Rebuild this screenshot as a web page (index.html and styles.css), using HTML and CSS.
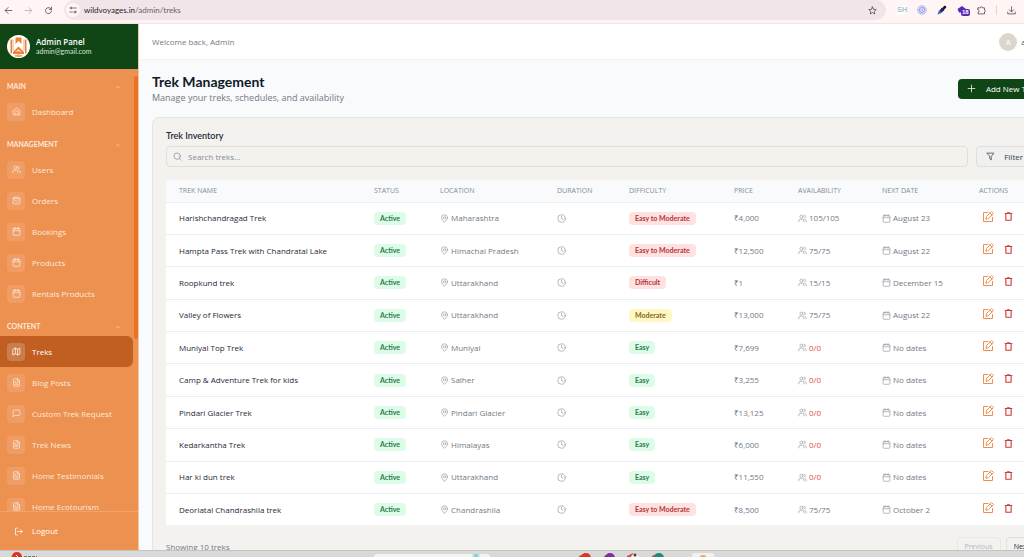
FILE: index.html
```
<!DOCTYPE html>
<html lang="en">
<head>
<meta charset="utf-8">
<title>Trek Management</title>
<link rel="stylesheet" href="styles.css">
</head>
<body>
<svg class="defs" aria-hidden="true">
  <symbol id="back" viewBox="0 0 24 24"><path d="M21 12H4M11 4l-8 8 8 8"/></symbol>
  <symbol id="forward" viewBox="0 0 24 24"><path d="M3 12h17M13 4l8 8-8 8"/></symbol>
  <symbol id="reload" viewBox="0 0 24 24"><path d="M20 13a8 8 0 1 1-2.500-6.500L20 9M20 3v6h-6"/></symbol>
  <symbol id="tune" viewBox="0 0 24 24"><circle cx="6" cy="6" r="3"/><path d="M13 6h9M2 18h9"/><circle cx="18" cy="18" r="3"/></symbol>
  <symbol id="star" viewBox="0 0 24 24"><path d="M12 2.500l2.900 6.400 7 .7-5.300 4.700 1.500 6.900-6.100-3.600-6.100 3.600 1.500-6.900-5.300-4.700 7-.7z"/></symbol>
  <symbol id="puzzle" viewBox="0 0 24 24"><path d="M3 5h6c0-4 6-4 6 0h5v6c3 0 3 5 0 5v5H3v-5c4 0 4-6 0-6z"/></symbol>
  <symbol id="download" viewBox="0 0 24 24"><path d="M12 2v13M6 10l6 6 6-6M2 16v5h20v-5"/></symbol>
  <symbol id="up" viewBox="0 0 24 24"><path d="M5 16l7-7 7 7"/></symbol>
  <symbol id="home" viewBox="0 0 24 24"><path d="M3 10l9-7 9 7v9a2 2 0 0 1-2 2H5a2 2 0 0 1-2-2z"/><path d="M8 21v-6a4 4 0 0 1 8 0v6"/></symbol>
  <symbol id="users" viewBox="0 0 24 24"><circle cx="9" cy="7" r="4"/><path d="M2 21v-2a5 5 0 0 1 5-5h4a5 5 0 0 1 5 5v2M22 21v-2a4 4 0 0 0-3-4M16 3a4 4 0 0 1 0 8"/></symbol>
  <symbol id="bag" viewBox="0 0 24 24"><path d="M6 3h12l3 4v12a2 2 0 0 1-2 2H5a2 2 0 0 1-2-2V7zM3 7h18M16 11a4 4 0 0 1-8 0"/></symbol>
  <symbol id="calendar" viewBox="0 0 24 24"><rect x="3" y="4" width="18" height="18" rx="2"/><path d="M8 1v6M16 1v6M3 10h18"/></symbol>
  <symbol id="map" viewBox="0 0 24 24"><path d="M3 6l6-3 6 3 6-3v15l-6 3-6-3-6 3zM9 3v15M15 6v15"/></symbol>
  <symbol id="file" viewBox="0 0 24 24"><path d="M14 2H6a2 2 0 0 0-2 2v16a2 2 0 0 0 2 2h12a2 2 0 0 0 2-2V8zM14 2v6h6M8 13h8M8 17h8M8 9h2"/></symbol>
  <symbol id="chat" viewBox="0 0 24 24"><path d="M21 15a2 2 0 0 1-2 2H7l-4 4V5a2 2 0 0 1 2-2h14a2 2 0 0 1 2 2z"/></symbol>
  <symbol id="logout" viewBox="0 0 24 24"><path d="M9 3H4v18h5M9 12h13M17 7l5 5-5 5"/></symbol>
  <symbol id="search" viewBox="0 0 24 24"><circle cx="11" cy="11" r="8.500"/><path d="M17 17l5 5"/></symbol>
  <symbol id="filter" viewBox="0 0 24 24"><path d="M3 3h18l-7 9v9l-4-3v-6z"/></symbol>
  <symbol id="plus" viewBox="0 0 24 24"><path d="M12 3v18M3 12h18"/></symbol>
  <symbol id="pin" viewBox="0 0 24 24"><path d="M20 10c0 6-8 12-8 12s-8-6-8-12a8 8 0 0 1 16 0z"/><circle cx="12" cy="10" r="3"/></symbol>
  <symbol id="clock" viewBox="0 0 24 24"><circle cx="12" cy="12" r="10"/><path d="M12 6v6l4 2"/></symbol>
  <symbol id="edit" viewBox="0 0 24 24"><path d="M12 3H3v18h18v-8M8 16l1-5L19 1l4 4-10 10zM16 4l4 4"/></symbol>
  <symbol id="trash" viewBox="0 0 24 24"><path d="M3 4h18M9 3V2h6v1M5 6v16h14V6"/></symbol>
</svg>

<header class="browser">
  <button class="tool" aria-label="Back"><svg><use href="#back"/></svg></button>
  <button class="tool dim" aria-label="Forward"><svg><use href="#forward"/></svg></button>
  <button class="tool" aria-label="Reload"><svg><use href="#reload"/></svg></button>
  <div class="address">
    <span class="site"><svg><use href="#tune"/></svg></span>
    <span class="url"><b>wildvoyages.in</b>/admin/treks</span>
    <button class="tool" aria-label="Bookmark"><svg><use href="#star"/></svg></button>
  </div>
  <div class="extensions">
    <span class="ext-sh">SH</span>
    <svg class="ext" viewBox="0 0 20 20"><circle cx="10" cy="10" r="8.500" fill="#eef" stroke="#8d9be8" stroke-width="1.500"/><circle cx="10" cy="10" r="5" fill="none" stroke="#7d8ff0" stroke-width="2"/><path d="M10 5a5 5 0 0 1 5 5" fill="none" stroke="#f09a8a" stroke-width="2"/><circle cx="10" cy="10" r="2" fill="#85b8f5"/></svg>
    <svg class="ext" viewBox="0 0 20 20"><path d="M1 19l2-6 6-6 4 4-6 6z" fill="#3d69c8"/><path d="M8 7l2-2 1 1 3-4c3-2 6 1 4 4l-4 3 1 1-2 2z" fill="#17172b"/><path d="M5 11l5-5 4 4-5 5z" fill="#1f2b57"/></svg>
    <span class="ext-badge"><svg class="ext" viewBox="0 0 20 20"><path d="M1 8l9-6 8 6-2 7H4z" fill="#5a2bb0"/></svg><span class="count">18</span></span>
    <button class="tool" aria-label="Extensions"><svg><use href="#puzzle"/></svg></button>
    <span class="sep"></span>
    <button class="tool" aria-label="Downloads"><svg><use href="#download"/></svg></button>
  </div>
</header>

<div class="app">
  <aside class="sidebar">
    <div class="brand">
      <svg class="logo" viewBox="0 0 46 46"><circle cx="23" cy="23" r="23" fill="#fff"/><path d="M7 9h3v28H7zM36 9h3v28h-3z" fill="#e9843a"/><path d="M17 5h12v13l-6-6-6 6z" fill="#e9843a"/><path d="M12 34l11-11 11 11v4H12z" fill="#e9843a"/><path d="M23 29l6 5-6-2-6 2z" fill="#fff"/><path d="M11 9h2v22h-2zM33 9h2v22h-2z" fill="#f3a468"/><path d="M14 42c5-4 13-4 18 0-5 3-13 3-18 0z" fill="#f3a468"/></svg>
      <div><div class="brand-name">Admin Panel</div><div class="brand-mail">admin@gmail.com</div></div>
    </div>
    <nav class="nav">
      <button class="group">MAIN<svg><use href="#up"/></svg></button>
      <a class="item" href="#"><i><svg><use href="#home"/></svg></i>Dashboard</a>
      <button class="group">MANAGEMENT<svg><use href="#up"/></svg></button>
      <a class="item" href="#"><i><svg><use href="#users"/></svg></i>Users</a>
      <a class="item" href="#"><i><svg><use href="#bag"/></svg></i>Orders</a>
      <a class="item" href="#"><i><svg><use href="#calendar"/></svg></i>Bookings</a>
      <a class="item" href="#"><i><svg><use href="#calendar"/></svg></i>Products</a>
      <a class="item" href="#"><i><svg><use href="#calendar"/></svg></i>Rentals Products</a>
      <button class="group">CONTENT<svg><use href="#up"/></svg></button>
      <a class="item active" href="#"><i><svg><use href="#map"/></svg></i>Treks</a>
      <a class="item" href="#"><i><svg><use href="#file"/></svg></i>Blog Posts</a>
      <a class="item" href="#"><i><svg><use href="#chat"/></svg></i>Custom Trek Request</a>
      <a class="item" href="#"><i><svg><use href="#file"/></svg></i>Trek News</a>
      <a class="item" href="#"><i><svg><use href="#file"/></svg></i>Home Testimonials</a>
      <a class="item" href="#"><i><svg><use href="#file"/></svg></i>Home Ecotourism</a>
      <span class="thumb"></span>
    </nav>
    <button class="logout"><svg><use href="#logout"/></svg>Logout</button>
  </aside>

  <main class="main">
    <div class="page">
      <div class="topbar"><span>Welcome back, Admin</span><div class="user"><span class="avatar">A</span>admin</div></div>
      <div class="content">
        <div class="heading">
          <div><h1>Trek Management</h1><p>Manage your treks, schedules, and availability</p></div>
          <button class="add"><svg><use href="#plus"/></svg>Add New Trek</button>
        </div>
        <section class="card">
          <h2>Trek Inventory</h2>
          <div class="filters">
            <label class="search"><svg><use href="#search"/></svg><input type="text" placeholder="Search treks..." aria-label="Search treks"></label>
            <button class="filter"><svg><use href="#filter"/></svg>Filter</button>
          </div>
          <table class="treks">
            <colgroup><col class="c-name"><col class="c-status"><col class="c-location"><col class="c-duration"><col class="c-difficulty"><col class="c-price"><col class="c-avail"><col class="c-date"><col></colgroup>
            <thead><tr><th>TREK NAME</th><th>STATUS</th><th>LOCATION</th><th>DURATION</th><th>DIFFICULTY</th><th>PRICE</th><th>AVAILABILITY</th><th>NEXT DATE</th><th>ACTIONS</th></tr></thead>
            <tbody id="rows"></tbody>
          </table>
          <div class="pager"><span>Showing 10 treks</span><div><button disabled>Previous</button><button>Next</button></div></div>
        </section>
      </div>
    </div>
  </main>
</div>

<footer class="taskbar">
  <svg class="widget" viewBox="0 0 40 7"><path d="M0 7a7 7 0 0 1 4-5v5z" fill="#e8a33a"/><circle cx="6" cy="7" r="5" fill="#d8322b"/><path d="M5 5l3 3" stroke="#fff"/><path d="M13 6.500h13" stroke="#777" stroke-dasharray="3 1"/></svg>
  <div class="tasksearch"></div>
  <svg class="apps" viewBox="0 0 140 7"><path d="M4 6l6-3v4H4zM29 6l6-3v4h-6zM52 6l6-3v4h-6zM77 6l6-3v4h-6z" fill="#e04a3a"/><circle cx="11" cy="8" r="5" fill="#d9381e"/><circle cx="35" cy="8" r="5" fill="#7b2fa8"/><circle cx="60" cy="8" r="4" fill="#eee"/><circle cx="60" cy="5" r="1.500" fill="#5b3a2b"/><circle cx="84" cy="8" r="5" fill="#178f7c"/><rect x="117" y="3" width="22" height="6" rx="2" fill="#f1f0ee"/><path d="M125 7a3 2 0 0 1 6 0z" fill="#f0a45a"/></svg>
</footer>
<script src="rows.js"></script>
</body>
</html>
```
FILE: rows.js
```
const treks = [
  ["Harishchandragad Trek", "Maharashtra", "Easy to Moderate", "4,000", "105/105", "August 23"],
  ["Hampta Pass Trek with Chandratal Lake", "Himachal Pradesh", "Easy to Moderate", "12,500", "75/75", "August 22"],
  ["Roopkund trek", "Uttarakhand", "Difficult", "1", "15/15", "December 15"],
  ["Valley of Flowers", "Uttarakhand", "Moderate", "13,000", "75/75", "August 22"],
  ["Muniyal Top Trek", "Muniyal", "Easy", "7,699", "0/0", "No dates"],
  ["Camp & Adventure Trek for kids", "Salher", "Easy", "3,255", "0/0", "No dates"],
  ["Pindari Glacier Trek", "Pindari Glacier", "Easy", "13,125", "0/0", "No dates"],
  ["Kedarkantha Trek", "Himalayas", "Easy", "6,000", "0/0", "No dates"],
  ["Har ki dun trek", "Uttarakhand", "Easy", "11,550", "0/0", "No dates"],
  ["Deoriatal Chandrashila trek", "Chandrashila", "Easy to Moderate", "8,500", "75/75", "October 2"]
];
const tones = { "Easy": "green", "Moderate": "yellow", "Difficult": "red", "Easy to Moderate": "red" };
const icon = (name) => `<svg><use href="#${name}"/></svg>`;

document.getElementById("rows").innerHTML = treks.map(([name, place, level, price, seats, date]) => `
  <tr>
    <td class="name">${name.replace("&", "&amp;")}</td>
    <td><span class="tag green">Active</span></td>
    <td><span class="meta">${icon("pin")}${place}</span></td>
    <td><span class="meta">${icon("clock")}</span></td>
    <td><span class="tag ${tones[level]}">${level}</span></td>
    <td>₹${price}</td>
    <td><span class="meta">${icon("users")}<span class="${seats === "0/0" ? "full" : ""}">${seats}</span></span></td>
    <td><span class="meta">${icon("calendar")}${date}</span></td>
    <td><span class="actions"><button class="edit" aria-label="Edit">${icon("edit")}</button><button class="delete" aria-label="Delete">${icon("trash")}</button></span></td>
  </tr>`).join("");
```
FILE: styles.css
```
* { box-sizing: border-box; }
body {
  margin: 0;
  height: 100vh;
  display: flex;
  flex-direction: column;
  overflow: hidden;
  font: 8px/12px "Open Sans", "Noto Sans", sans-serif;
  color: #737983;
}
button {
  font: inherit;
  color: inherit;
  background: none;
  border: 0;
  padding: 0;
  display: flex;
  align-items: center;
}
svg { display: block; width: 9px; height: 9px; flex: none; }
symbol { fill: none; stroke: currentColor; stroke-width: 2; stroke-linecap: round; stroke-linejoin: round; }
.defs { position: absolute; width: 0; height: 0; }
#trash { stroke-width: 3; }

/* Browser toolbar */
.browser {
  flex: none;
  height: 24px;
  display: flex;
  align-items: center;
  gap: 11px;
  padding: 0 8px 3px 4px;
  background: #fff5f4;
  border-bottom: 1px solid #f3e3e3;
  color: #4a3f42;
  font-family: Roboto, "Noto Sans", sans-serif;
}
.browser .dim { color: #b5a6a8; }
.address {
  flex: 1;
  height: 20px;
  display: flex;
  align-items: center;
  gap: 4px;
  padding: 0 9px 0 2px;
  border-radius: 10px;
  background: #f2e5ea;
}
.site { width: 14px; height: 14px; border-radius: 50%; background: #fff5f6; display: grid; place-items: center; }
.site svg { width: 8px; height: 8px; }
.url { flex: 1; font: 8px/12px Lato, sans-serif; color: #6a5f63; }
.url b { font-weight: 400; color: #2a2226; }
.extensions { display: flex; align-items: center; gap: 10px; }
.ext-sh { font: 7px/8px "Liberation Sans", sans-serif; color: #7ba4b8; background: #fff; }
.ext { width: 10px; height: 10px; }
.ext-badge { position: relative; }
.count {
  position: absolute;
  left: 4px;
  top: 4px;
  padding: 0 1px;
  border-radius: 2px;
  background: #5a2bb0;
  color: #fff;
  font: bold 6px/7px "Liberation Sans", sans-serif;
}
.sep { width: 1px; height: 10px; background: #f6cdd3; }

/* Sidebar */
.app { flex: 1; min-height: 0; display: flex; }
.sidebar {
  flex: none;
  width: 139px;
  display: flex;
  flex-direction: column;
  background: #ed9151;
  border-right: 1px solid #f6c7a3;
  color: #fbe9da;
}
.brand {
  flex: none;
  height: 45px;
  display: flex;
  align-items: center;
  gap: 6px;
  padding: 0 7px;
  background: #104616;
  color: #fff;
}
.logo { width: 23px; height: 23px; }
.brand-name { font-weight: 600; line-height: 10px; }
.brand-mail { font: 7px/9px Lato, sans-serif; color: #d5e2d6; }
.nav { position: relative; flex: 1; min-height: 0; overflow: hidden; }
.thumb { position: absolute; right: 0; top: 7px; width: 4px; height: 263px; background: #ea7225; border-radius: 2px; }
.group {
  width: 100%;
  justify-content: space-between;
  padding: 12px 17px 4px 7px;
  font: 700 7px/11px Lato, sans-serif;
}
.group svg { width: 6px; height: 6px; }
.item {
  display: flex;
  align-items: center;
  gap: 7px;
  height: 31px;
  margin-right: 5px;
  padding-left: 7px;
  border-radius: 0 6px 6px 0;
  color: inherit;
  font-weight: 500;
  text-decoration: none;
}
.item i { width: 18px; height: 18px; border-radius: 4px; background: #f09d65; display: grid; place-items: center; }
.item.active { background: #c05f21; color: #fff; }
.item.active i { background: #cc7d4b; }
.logout {
  flex: none;
  height: 39px;
  gap: 9px;
  padding-left: 14px;
  border-top: 1px solid #f1a36d;
  color: #fff;
  font-weight: 500;
}

/* Main area is wider than the window and clipped on the right */
.main { flex: 1; min-width: 0; overflow: hidden; background: #f8fafc; }
.page { width: calc(100% + 42px); }
.topbar {
  height: 36px;
  display: flex;
  align-items: center;
  justify-content: space-between;
  padding: 0 21px 0 13px;
  background: #fff;
  border-bottom: 1px solid #f0f2f4;
}
.user { display: flex; align-items: center; gap: 4px; color: #374151; }
.avatar { width: 18px; height: 18px; border-radius: 50%; background: #dcd6cc; color: #fff; display: grid; place-items: center; }
.content { padding: 13px 14px 0 13px; }
.heading { display: flex; justify-content: space-between; align-items: center; margin-bottom: 13px; }
h1 { margin: 0; font: 700 14px/18px Lato, sans-serif; color: #111827; }
.heading p { margin: 0; font-size: 9px; line-height: 13px; }
.add { height: 20px; gap: 10px; padding: 0 14px 0 9px; border-radius: 4px; background: #104616; color: #fff; font-weight: 500; }
.card {
  padding: 12px 14px 12px 13px;
  border: 1px solid #e4e5e5;
  border-radius: 7px;
  background: #f4f2ef;
}
h2 { margin: 0; font: 600 9px/12px Lato, sans-serif; color: #1f2937; }
.filters { display: flex; gap: 8px; margin: 4px 0 13px; }
.search, .filter { height: 21px; border: 1px solid #e3ded6; border-radius: 4px; }
.search { flex: 1; display: flex; align-items: center; gap: 6px; padding: 0 6px; color: #8b929d; }
.search input { flex: 1; border: 0; outline: 0; padding: 0; background: none; font: inherit; }
.search input::placeholder { color: #858b95; }
.filter { gap: 9px; padding: 0 13px 0 9px; border-color: #dedfe0; background: #f0f0ef; color: #374151; font-weight: 500; }

/* Trek table */
.treks { width: 100%; height: 345px; table-layout: fixed; border-collapse: collapse; background: #fff; }
.c-name { width: 195px; }
.c-status { width: 66px; }
.c-location { width: 117px; }
.c-duration { width: 72px; }
.c-difficulty { width: 105px; }
.c-price { width: 64px; }
.c-avail { width: 84px; }
.c-date { width: 97px; }
th { height: 22px; padding: 0 0 0 13px; background: #f8fafc; text-align: left; font-size: 7px; font-weight: 500; color: #858c97; }
td { padding: 0 0 0 13px; border-top: 1px solid #eceef0; white-space: nowrap; }
.name { color: #1f2937; font-weight: 500; }
.tag { display: inline-block; padding: 0 6px; border-radius: 4px; font: 700 7px/13px Lato, sans-serif; }
.green { background: #dcfce7; color: #2b7a4b; }
.yellow { background: #fef9c3; color: #8a6420; }
.red { background: #fee2e2; color: #b43434; }
.meta { display: flex; align-items: center; gap: 2px; }
.meta svg { color: #9ca3af; }
.full { color: #e5484d; }
.actions { display: flex; gap: 10px; padding: 0 0 3px 3px; }
.edit { color: #ee8f4e; }
.edit svg { width: 12px; height: 12px; }
.delete { color: #d03b3b; }
.pager { display: flex; justify-content: space-between; align-items: center; padding-top: 12px; }
.pager div { display: flex; gap: 5px; }
.pager button { height: 20px; padding: 0 7px; border: 1px solid #e2e0dc; border-radius: 4px; font-size: 7px; color: #1f2937; font-weight: 500; }
.pager button:disabled { color: #b3b5b8; border-color: #eae8e4; }

/* System task bar */
.taskbar {
  flex: none;
  height: 7px;
  display: flex;
  align-items: flex-end;
  background: #d9d9d9;
  border-top: 1px solid #c4c4c2;
  padding-left: 11px;
  overflow: hidden;
}
.widget { width: 40px; height: 7px; }
.tasksearch { width: 116px; height: 3px; margin-left: 323px; border-radius: 4px 4px 0 0; background: linear-gradient(90deg, #f3f3f3 84%, #67cad6 88%, #f3f3f3 92%); }
.apps { width: 140px; height: 7px; margin-left: 85px; }
```
